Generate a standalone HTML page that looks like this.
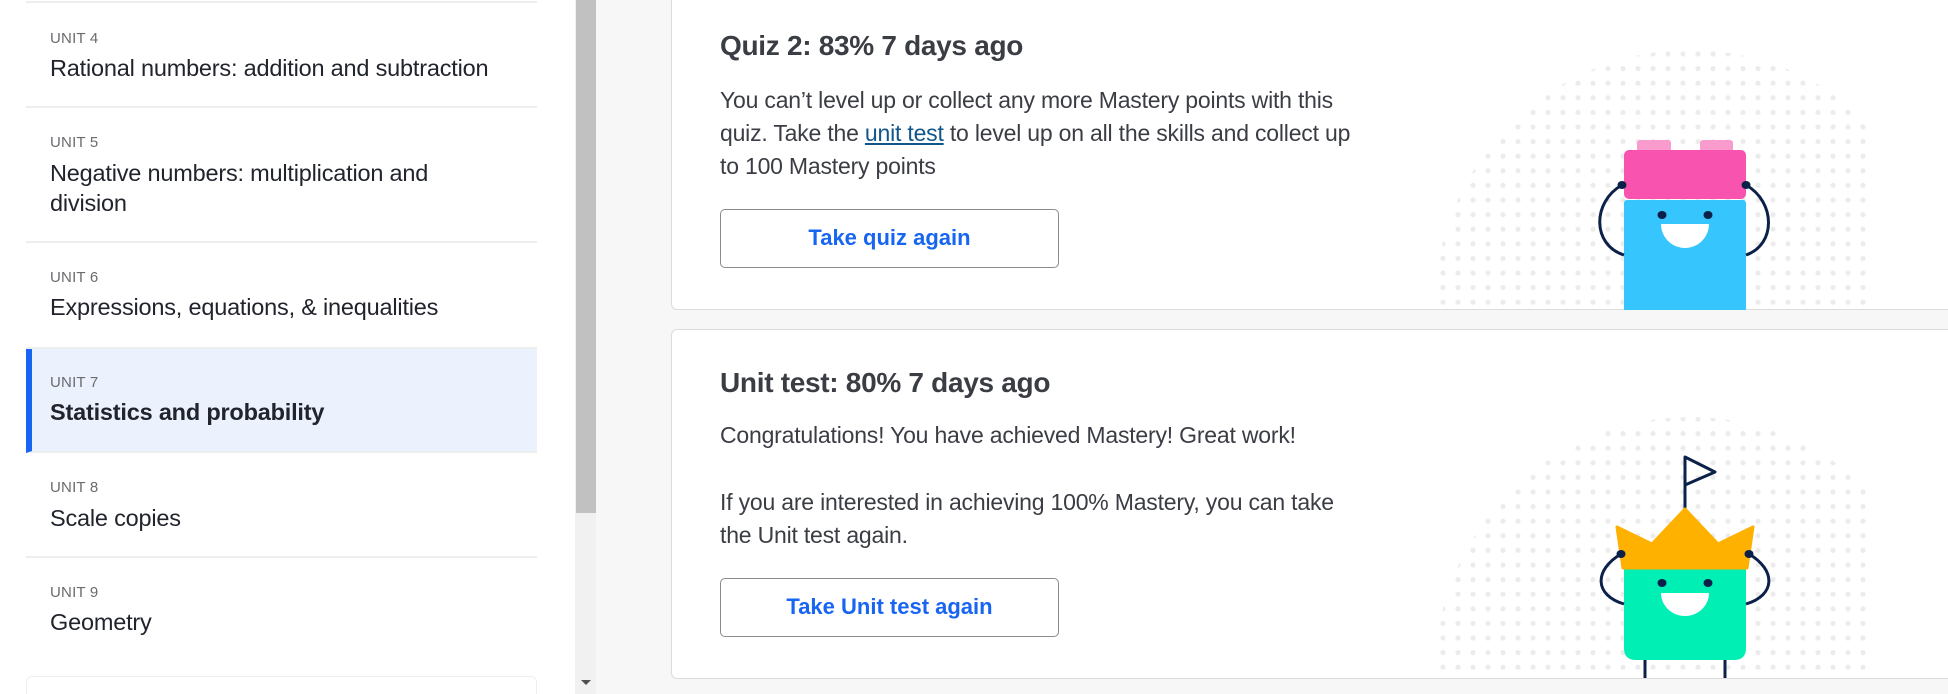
<!DOCTYPE html>
<html><head><meta charset="utf-8"><style>
*{margin:0;padding:0;box-sizing:border-box}
html,body{width:1948px;height:694px;overflow:hidden}
body{background:#f7f7f8;font-family:"Liberation Sans",sans-serif;position:relative}
.side{position:absolute;left:0;top:0;width:575px;height:694px;background:#fff;overflow:hidden}
.item{position:absolute;left:26px;width:511px;border-bottom:2px solid #eeeeef}
.lab{position:absolute;left:24px;font-size:15px;color:#6b6b70;letter-spacing:.2px}
.tit{position:absolute;left:24px;font-size:23.5px;color:#21242c;line-height:30px;white-space:nowrap;letter-spacing:-.2px}
.sb{position:absolute;left:575px;top:0;width:21px;height:694px;background:#f1f1f1}
.thumb{position:absolute;left:576px;top:0;width:20px;height:513px;background:#c1c1c1}
.card{position:absolute;left:671px;width:1320px;background:#fff;border:1.5px solid #dcdcdd;border-radius:6px}
.h{position:absolute;left:48px;font-size:28px;font-weight:bold;color:#3b3d44;white-space:nowrap;letter-spacing:-.3px}
.p{position:absolute;left:48px;font-size:23px;color:#3b3d44;line-height:33px;white-space:nowrap;letter-spacing:-.2px}
.p a{color:#11568a;text-decoration:underline}
.btn{position:absolute;left:48px;width:339px;height:59px;border:1.5px solid #8a8b90;border-radius:5px;text-align:center;line-height:56px;font-size:22px;font-weight:bold;color:#1865f2}
</style></head><body>
<div class="side">
 <div style="position:absolute;left:26px;top:1px;width:511px;height:2px;background:#eeeeef"></div>
 <div class="item" style="top:3px;height:105px"><div class="lab" style="top:27px">UNIT 4</div><div class="tit" style="top:50px">Rational numbers: addition and subtraction</div></div>
 <div class="item" style="top:108px;height:135px"><div class="lab" style="top:26px">UNIT 5</div><div class="tit" style="top:50px">Negative numbers: multiplication and<br>division</div></div>
 <div class="item" style="top:243px;height:106px"><div class="lab" style="top:26px">UNIT 6</div><div class="tit" style="top:49px">Expressions, equations, &amp; inequalities</div></div>
 <div class="item" style="top:349px;height:104px;background:#ebf1fd;border-left:6px solid #1865f2"><div class="lab" style="top:25px;left:18px">UNIT 7</div><div class="tit" style="top:48px;left:18px;font-weight:bold">Statistics and probability</div></div>
 <div class="item" style="top:453px;height:105px"><div class="lab" style="top:26px">UNIT 8</div><div class="tit" style="top:50px">Scale copies</div></div>
 <div class="item" style="top:558px;height:118px;border-bottom:none"><div class="lab" style="top:26px">UNIT 9</div><div class="tit" style="top:49px">Geometry</div></div>
 <div style="position:absolute;left:26px;top:676px;width:511px;height:30px;border:1.5px solid #eeeeef;border-radius:6px"></div>
</div>
<div class="sb"></div><div class="thumb"></div>
<div style="position:absolute;left:581px;top:680px;width:0;height:0;border-left:5px solid transparent;border-right:5px solid transparent;border-top:5px solid #505050"></div>

<div class="card" style="top:-10px;height:320px">
 <div class="h" style="top:39px">Quiz 2: 83% 7 days ago</div>
 <div class="p" style="top:93px">You can’t level up or collect any more Mastery points with this<br>quiz. Take the <a>unit test</a> to level up on all the skills and collect up<br>to 100 Mastery points</div>
 <div class="btn" style="top:218px">Take quiz again</div>
</div>
<div class="card" style="top:329px;height:350px">
 <div class="h" style="top:37px">Unit test: 80% 7 days ago</div>
 <div class="p" style="top:89px">Congratulations! You have achieved Mastery! Great work!</div>
 <div class="p" style="top:156px">If you are interested in achieving 100% Mastery, you can take<br>the Unit test again.</div>
 <div class="btn" style="top:248px">Take Unit test again</div>
</div>

<svg style="position:absolute;left:0;top:0" width="1948" height="694" viewBox="0 0 1948 694">
<defs>
<pattern id="dp" x="1440" y="51" width="15" height="14.6" patternUnits="userSpaceOnUse"><circle cx="3" cy="3" r="2.6" fill="#ececec"/></pattern>
<clipPath id="c1"><rect x="1440" y="0" width="432" height="309"/></clipPath>
<clipPath id="c2"><rect x="1440" y="331" width="432" height="346"/></clipPath>
</defs>
<g clip-path="url(#c1)"><circle cx="1690" cy="305" r="255" fill="url(#dp)"/></g>
<g clip-path="url(#c2)"><circle cx="1690" cy="672" r="255" fill="url(#dp)"/></g>
<rect x="1637" y="140" width="34" height="14" rx="3" fill="#f99bcd"/>
<rect x="1700" y="140" width="33" height="14" rx="3" fill="#f99bcd"/>
<rect x="1624" y="150" width="122" height="49" rx="5" fill="#f953b0"/>
<rect x="1624" y="200" width="122" height="110" rx="3" fill="#37c5fd"/>
<rect x="1624" y="290" width="122" height="20" fill="#37c5fd"/>
<path d="M1622,185 C1592,202 1592,245 1624,255 M1746,185 C1776,202 1776,245 1746,255" fill="none" stroke="#0b2149" stroke-width="3"/>
<ellipse cx="1622" cy="185" rx="4.5" ry="4" fill="#0b2149"/><ellipse cx="1746" cy="185" rx="4.5" ry="4" fill="#0b2149"/>
<ellipse cx="1662" cy="215" rx="4.5" ry="4" fill="#0b2149"/><ellipse cx="1708" cy="215" rx="4.5" ry="4" fill="#0b2149"/>
<path d="M1661,224 L1709,224 A24,24 0 0 1 1661,224 Z" fill="#fff"/>
<path d="M1685,509 L1685,457 L1715,472 L1685,485" fill="none" stroke="#0b2149" stroke-width="3" stroke-linejoin="round"/>
<path d="M1645,655 V678 M1725,655 V678" stroke="#0b2149" stroke-width="3"/>
<path d="M1624,568 H1746 V648 Q1746,660 1734,660 H1636 Q1624,660 1624,648 Z" fill="#00efb5"/>
<path d="M1617,527 L1652,544 L1685,509 L1718,544 L1753,527 L1747,568 L1623,568 Z" fill="#ffb100" stroke="#ffb100" stroke-width="3" stroke-linejoin="round"/>
<path d="M1621,554 C1594,570 1594,595 1624,604 M1749,554 C1776,570 1776,595 1746,604" fill="none" stroke="#0b2149" stroke-width="3"/>
<ellipse cx="1621" cy="554" rx="4.5" ry="4" fill="#0b2149"/><ellipse cx="1749" cy="554" rx="4.5" ry="4" fill="#0b2149"/>
<ellipse cx="1662" cy="583" rx="4.5" ry="4" fill="#0b2149"/><ellipse cx="1708" cy="583" rx="4.5" ry="4" fill="#0b2149"/>
<path d="M1661,593 L1709,593 A24,23 0 0 1 1661,593 Z" fill="#fff"/>
</svg>
</body></html>
